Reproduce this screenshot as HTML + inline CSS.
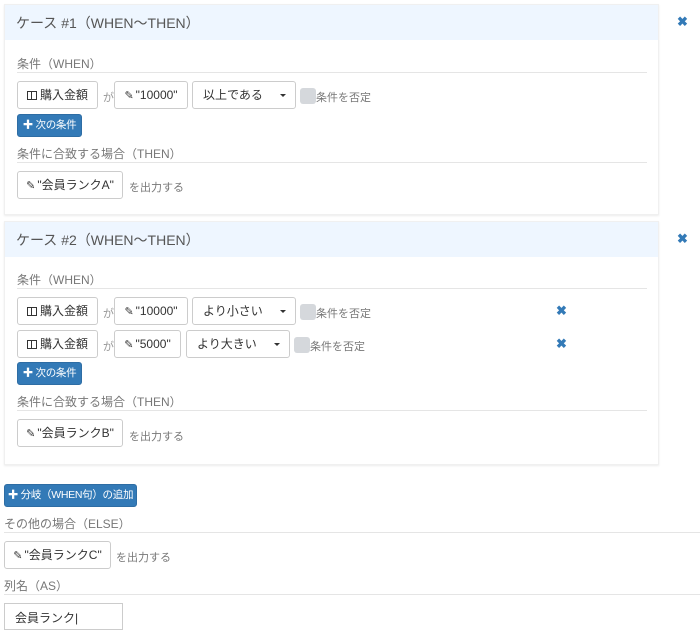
<!DOCTYPE html>
<html><head><meta charset="utf-8"><style>
*{box-sizing:border-box;margin:0;padding:0}
body{width:700px;height:633px;background:#fff;font-family:"Liberation Sans","Noto Sans CJK JP",sans-serif;position:relative;overflow:hidden;color:#333}
.a{position:absolute}
div{white-space:nowrap}
.panel{position:absolute;left:4px;width:655px;background:#fff;box-shadow:0 1px 2px rgba(0,0,0,.08);border:1px solid #f0f0f0}
.hd{position:absolute;left:0;right:0;top:0;height:35px;background:#eef6ff;color:#555;font-size:14px;padding:8px 0 0 11px}
.lbl{position:absolute;font-size:12px;color:#777}
.line{position:absolute;height:1px;background:#e5e5e5}
.btn{position:absolute;border:1px solid #ccc;border-radius:3px;background:#fff;font-size:12px;color:#333;height:28px;line-height:26px;text-align:center}
.blue{position:absolute;background:#337ab7;border:1px solid #2e6da4;border-radius:3px;color:#fff;font-size:10.5px;height:23px;line-height:21px;text-align:center;letter-spacing:-0.3px}
.sel{position:absolute;border:1px solid #ccc;border-radius:3px;background:#fff;font-size:12px;height:28px;line-height:26px;padding-left:10px}
.sel:after{content:"";position:absolute;right:9px;top:12px;border-left:3px solid transparent;border-right:3px solid transparent;border-top:3px solid #333}
.cb{position:absolute;width:16px;height:16px;background:#d5d8dc;border-radius:3px}
.cbt{position:absolute;font-size:11px;color:#777}
.ga{position:absolute;font-size:11px;color:#999}
.x{position:absolute;color:#337ab7;font-size:13px;font-weight:bold}
.bk{display:inline-block;width:10px;height:9px;border:1.5px solid #333;position:relative;margin-right:3px;vertical-align:-1px}
.bk:after{content:"";position:absolute;left:3px;top:0;bottom:0;width:1px;background:#333}
.pen{font-size:11px;margin-right:2px}
.out{position:absolute;font-size:11px;color:#777}
</style></head><body>

<div class="panel" style="top:4px;height:211px">
<div class="hd">ケース #1（WHEN〜THEN）</div>
</div>
<div class="lbl" style="left:17px;top:55px">条件（WHEN）</div>
<div class="line" style="left:17px;top:72px;width:630px"></div>
<div class="btn" style="left:17px;top:81px;width:81px"><span class="bk"></span>購入金額</div>
<div class="ga" style="left:103px;top:89px">が</div>
<div class="btn" style="left:114px;top:81px;width:74px"><span class="pen">✎</span>"10000"</div>
<div class="sel" style="left:192px;top:81px;width:104px">以上である</div>
<div class="cb" style="left:300px;top:88px"></div>
<div class="cbt" style="left:316px;top:89px">条件を否定</div>
<div class="blue" style="left:17px;top:114px;width:65px">✚ 次の条件</div>
<div class="lbl" style="left:17px;top:145px">条件に合致する場合（THEN）</div>
<div class="line" style="left:17px;top:162px;width:630px"></div>
<div class="btn" style="left:17px;top:171px;width:106px"><span class="pen">✎</span>"会員ランクA"</div>
<div class="out" style="left:129px;top:179px">を出力する</div>
<div class="x" style="left:677px;top:14px">✖</div>

<div class="panel" style="top:221px;height:244px">
<div class="hd">ケース #2（WHEN〜THEN）</div>
</div>
<div class="x" style="left:677px;top:231px">✖</div>
<div class="lbl" style="left:17px;top:271px">条件（WHEN）</div>
<div class="line" style="left:17px;top:288px;width:630px"></div>
<div class="btn" style="left:17px;top:297px;width:81px"><span class="bk"></span>購入金額</div>
<div class="ga" style="left:103px;top:305px">が</div>
<div class="btn" style="left:114px;top:297px;width:74px"><span class="pen">✎</span>"10000"</div>
<div class="sel" style="left:192px;top:297px;width:104px">より小さい</div>
<div class="cb" style="left:300px;top:304px"></div>
<div class="cbt" style="left:316px;top:305px">条件を否定</div>
<div class="x" style="left:556px;top:303px">✖</div>
<div class="btn" style="left:17px;top:330px;width:81px"><span class="bk"></span>購入金額</div>
<div class="ga" style="left:103px;top:338px">が</div>
<div class="btn" style="left:114px;top:330px;width:67px"><span class="pen">✎</span>"5000"</div>
<div class="sel" style="left:186px;top:330px;width:104px">より大きい</div>
<div class="cb" style="left:294px;top:337px"></div>
<div class="cbt" style="left:310px;top:338px">条件を否定</div>
<div class="x" style="left:556px;top:336px">✖</div>
<div class="blue" style="left:17px;top:362px;width:65px">✚ 次の条件</div>
<div class="lbl" style="left:17px;top:393px">条件に合致する場合（THEN）</div>
<div class="line" style="left:17px;top:410px;width:630px"></div>
<div class="btn" style="left:17px;top:419px;width:106px"><span class="pen">✎</span>"会員ランクB"</div>
<div class="out" style="left:129px;top:428px">を出力する</div>

<div class="blue" style="left:4px;top:484px;width:133px">✚ 分岐（WHEN句）の追加</div>
<div class="lbl" style="left:4px;top:515px">その他の場合（ELSE）</div>
<div class="line" style="left:4px;top:532px;width:696px"></div>
<div class="btn" style="left:4px;top:541px;width:107px"><span class="pen">✎</span>"会員ランクC"</div>
<div class="out" style="left:116px;top:549px">を出力する</div>
<div class="lbl" style="left:4px;top:577px">列名（AS）</div>
<div class="line" style="left:4px;top:594px;width:696px"></div>
<div class="a" style="left:4px;top:603px;width:119px;height:27px;border:1px solid #ccc;font-size:12px;padding:5px 0 0 10px">会員ランク|</div>
</body></html>
